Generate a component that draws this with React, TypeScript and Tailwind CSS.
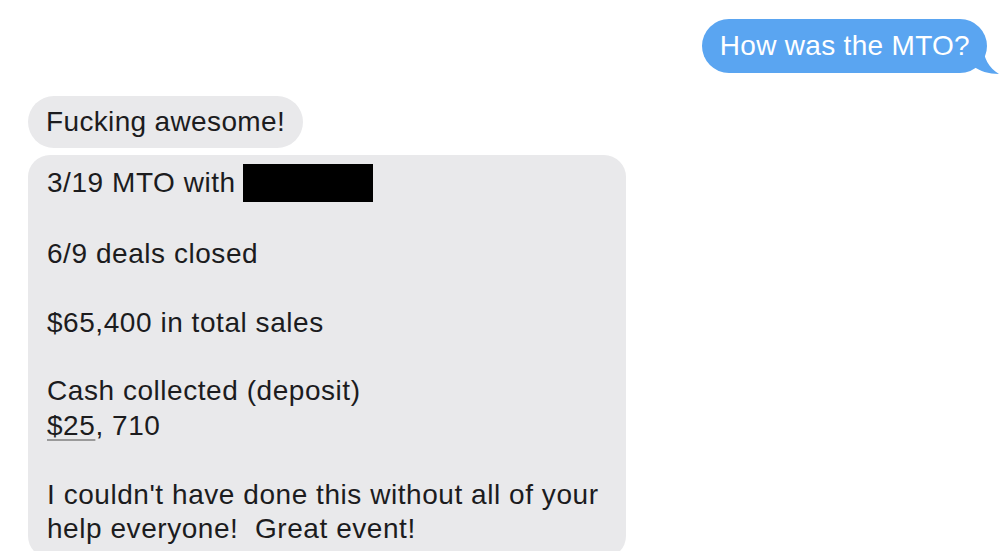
import React from "react";

export default function App() {
  const font = { fontFamily: '"Liberation Sans", Arial, sans-serif' };
  return (
    <div className="w-[999px] h-[551px] overflow-hidden bg-white relative" style={font}>
      <div className="flex flex-col pt-[19px]">
        <div className="flex justify-end pr-[12px]">
          <div className="relative">
            <div className="relative z-10 bg-[#5aa5f1] text-white text-[28px] tracking-[0.3px] leading-[34px] pl-[18px] pr-[17px] py-[10px] rounded-[27px]">
              How was the MTO?
            </div>
            <svg className="absolute right-[-12px] bottom-[-1px] z-0" width="30" height="30" viewBox="0 0 30 30">
              <path d="M4 0 L14 0 C14 14 20 24 30 30 C20 30 10 27 4 22 Z" fill="#5aa5f1" />
            </svg>
          </div>
        </div>
        <div className="pl-[28px] mt-[23px] flex flex-col items-start gap-[7px] text-[#1c1c1e] text-[28px] leading-[34.4px]">
          <div className="bg-[#e9e9eb] rounded-[26px] px-[18px] py-[9px] tracking-[0.35px]">Fucking awesome!</div>
          <div className="bg-[#e9e9eb] rounded-[22px] w-[598px] pl-[19px] pr-[6px] pt-[9px] pb-[12px] whitespace-nowrap tracking-[0.55px]">
            <div className="flex items-center">
              <span>3/19 MTO with</span>
              <span className="inline-block bg-black w-[130px] h-[38px] ml-[7px]"></span>
            </div>
            <div>&nbsp;</div>
            <div>6/9 deals closed</div>
            <div>&nbsp;</div>
            <div>$65,400 in total sales</div>
            <div>&nbsp;</div>
            <div>Cash collected (deposit)</div>
            <div>
              <span className="underline decoration-[#9a9a9a] decoration-[2px] underline-offset-[4px]">$25</span>, 710
            </div>
            <div>&nbsp;</div>
            <div>I couldn't have done this without all of your</div>
            <div>help everyone!&nbsp; Great event!</div>
          </div>
        </div>
      </div>
    </div>
  );
}
